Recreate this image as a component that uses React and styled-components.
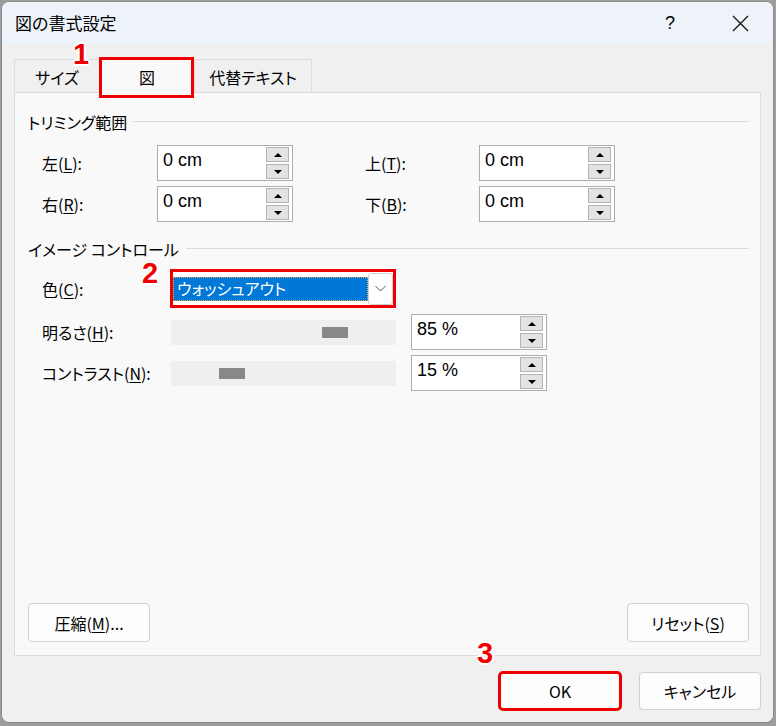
import React from "react";
import styled, { createGlobalStyle } from "styled-components";

const Global = createGlobalStyle`
  html, body { margin: 0; padding: 0; }
  body {
    width: 776px;
    height: 726px;
    overflow: hidden;
    background: #9d9d9d;
    font-family: "Noto Sans CJK JP", "Noto Sans", sans-serif;
    font-feature-settings: "palt";
    color: #000;
  }
  #root { width: 776px; height: 726px; }
`;

const Window = styled.div`
  box-sizing: border-box;
  margin: 1px 0 0 1px;
  width: 773px;
  height: 722px;
  border: 1px solid #8a8a8a;
  border-radius: 8px;
  background: #f0f0f0;
  overflow: hidden;
  display: flex;
  flex-direction: column;
`;

const TitleBar = styled.div`
  flex: none;
  height: 42px;
  background: #eef3f9;
  display: flex;
  align-items: center;
  padding: 0 10px 0 13px;
`;

const Title = styled.div`
  flex: 1;
  font-size: 17px;
  line-height: 22px;
`;

const Controls = styled.div`
  display: flex;
  gap: 24px;
`;

const ControlButton = styled.div`
  width: 46px;
  height: 30px;
  display: flex;
  align-items: center;
  justify-content: center;
  font-size: 18px;
  font-weight: 300;
  font-family: "Liberation Sans", sans-serif;
`;

const Body = styled.div`
  flex: 1;
  display: flex;
  flex-direction: column;
  padding: 13px 12px 12px 12px;
`;

const TabStrip = styled.div`
  flex: none;
  height: 35px;
  display: flex;
  align-items: flex-end;
  position: relative;
  z-index: 1;
`;

const Tab = styled.div`
  position: relative;
  box-sizing: border-box;
  width: ${(p) => p.$width}px;
  height: ${(p) => (p.$active ? 36 : 33)}px;
  margin-bottom: ${(p) => (p.$active ? -1 : 0)}px;
  border: 1px solid #dcdcdc;
  border-bottom: none;
  background: ${(p) => (p.$active ? "#f9f9f9" : "#f0f0f0")};
  display: flex;
  align-items: center;
  justify-content: center;
  padding-top: ${(p) => (p.$active ? 3 : 2)}px;
  font-size: 16px;
  line-height: 20px;

  ${(p) =>
    p.$annotated &&
    `
    &::after {
      content: "";
      position: absolute;
      left: -2px;
      top: -1px;
      right: -1px;
      bottom: -5px;
      border: 3px solid #ee0000;
      box-sizing: border-box;
    }
  `}
`;

const Marker = styled.span`
  position: absolute;
  left: ${(p) => p.$left}px;
  top: ${(p) => p.$top}px;
  font-family: "Liberation Sans", sans-serif;
  font-weight: 700;
  font-size: 29px;
  line-height: 22px;
  color: #ee0000;
  z-index: 3;
  text-shadow: 1px 1px 0 #fff, -1px -1px 0 #fff, 1px -1px 0 #fff, -1px 1px 0 #fff,
    2px 0 0 #fff, -2px 0 0 #fff, 0 2px 0 #fff, 0 -2px 0 #fff;
`;

const Panel = styled.div`
  flex: none;
  box-sizing: border-box;
  height: 564px;
  border: 1px solid #dcdcdc;
  background: #f9f9f9;
  display: flex;
  flex-direction: column;
  padding: 19px 11px 13px 13px;
`;

const SectionHeader = styled.div`
  display: flex;
  align-items: center;
  gap: ${(p) => p.$gap || 6}px;
  margin-top: ${(p) => p.$mt || 0}px;
  font-size: 16px;
  line-height: 20px;
  white-space: nowrap;

  &::after {
    content: "";
    flex: 1;
    height: 1px;
    background: #dcdcdc;
    margin-top: -1px;
  }
`;

const CropGrid = styled.div`
  margin-top: 13px;
  padding-left: 14px;
  display: grid;
  grid-template-columns: 115px 136px 72px 114px 136px;
  grid-auto-rows: 36px;
  row-gap: 5px;
  align-items: center;
`;

const Gap = styled.div``;

const Label = styled.div`
  font-size: 16px;
  line-height: 20px;
  white-space: nowrap;
`;

const Key = styled.u`
  text-underline-offset: 2px;
  text-decoration-thickness: 1px;
`;

const SpinBox = styled.div`
  box-sizing: border-box;
  width: 136px;
  height: 36px;
  border: 1px solid #adadad;
  background: #fff;
  display: flex;
  align-items: flex-start;
`;

const SpinValue = styled.div`
  flex: 1;
  padding: 4px 0 0 5px;
  font-family: "Liberation Sans", sans-serif;
  font-size: 18px;
  line-height: 20px;
  white-space: pre;
`;

const SpinButtons = styled.div`
  align-self: stretch;
  display: flex;
  flex-direction: column;
  gap: 2px;
  padding: 1px 3px 1px 0;
`;

const SpinButton = styled.div`
  box-sizing: border-box;
  flex: 1;
  width: 23px;
  border: 1px solid #b4b4b4;
  background: #e3e3e3;
  display: flex;
  align-items: center;
  justify-content: center;

  &::before {
    content: "";
    width: 0;
    height: 0;
    border-left: 4px solid transparent;
    border-right: 4px solid transparent;
    ${(p) =>
      p.$dir === "up"
        ? "border-bottom: 4px solid #000;"
        : "border-top: 4px solid #000;"}
  }
`;

const ControlRow = styled.div`
  margin-top: ${(p) => p.$mt}px;
  padding-left: 14px;
  display: grid;
  grid-template-columns: 113px 226px 136px;
  column-gap: 15px;
  align-items: center;
`;

const Combo = styled.div`
  position: relative;
  box-sizing: border-box;
  width: 226px;
  height: 39px;
  border: 3px solid #ee0000;
  background: #fff;
  display: flex;
  align-items: center;
`;

const ComboValue = styled.div`
  box-sizing: border-box;
  flex: 1;
  height: 24px;
  background: #0078d7;
  border: 1px dotted #f3a64a;
  color: #fff;
  font-size: 16px;
  line-height: 21px;
  padding-left: 3px;
  white-space: nowrap;
`;

const ComboButton = styled.div`
  box-sizing: border-box;
  width: 25px;
  height: 32px;
  background: #fff;
  border: 1px solid #d0d0d0;
  border-radius: 3px;
  display: flex;
  align-items: center;
  justify-content: center;
`;

const Track = styled.div`
  justify-self: end;
  width: 225px;
  height: 25px;
  background: #efefef;
  display: flex;
  align-items: center;
`;

const Thumb = styled.div`
  width: 26px;
  height: 11px;
  background: #888;
  margin-left: ${(p) => p.$offset}px;
`;

const PanelButtons = styled.div`
  margin-top: auto;
  display: flex;
  justify-content: space-between;
`;

const Button = styled.div`
  position: relative;
  box-sizing: border-box;
  width: 122px;
  height: ${(p) => p.$h || 38}px;
  border: 1px solid #d0d0d0;
  border-radius: 4px;
  background: #fdfdfd;
  display: flex;
  align-items: center;
  justify-content: center;
  font-size: 16px;
  line-height: 20px;
  white-space: nowrap;
  ${(p) =>
    p.$annotated &&
    `
    outline: 3px solid #ee0000;
    outline-offset: -2px;
  `}
`;

const Footer = styled.div`
  margin-top: 16px;
  display: flex;
  justify-content: flex-end;
  gap: 18px;
`;

const Close = () => (
  <svg width="17" height="17" viewBox="0 0 17 17">
    <path d="M1 1 L16 16 M16 1 L1 16" stroke="#111" strokeWidth="1.3" fill="none" />
  </svg>
);

const Chevron = () => (
  <svg width="11" height="7" viewBox="0 0 11 7">
    <path d="M0.5 1 L5.5 6 L10.5 1" stroke="#555" strokeWidth="1" fill="none" />
  </svg>
);

const Spin = ({ value }) => (
  <SpinBox>
    <SpinValue>{value}</SpinValue>
    <SpinButtons>
      <SpinButton $dir="up" />
      <SpinButton $dir="down" />
    </SpinButtons>
  </SpinBox>
);

export default function App() {
  return (
    <>
      <Global />
      <Window>
        <TitleBar>
          <Title>図の書式設定</Title>
          <Controls>
            <ControlButton>?</ControlButton>
            <ControlButton>
              <Close />
            </ControlButton>
          </Controls>
        </TitleBar>
        <Body>
          <TabStrip>
            <Tab $width={86}>サイズ</Tab>
            <Tab $width={94} $active $annotated>
              図
              <Marker $left={-28} $top={-15}>1</Marker>
            </Tab>
            <Tab $width={118}>代替テキスト</Tab>
          </TabStrip>
          <Panel>
            <SectionHeader>トリミング範囲</SectionHeader>
            <CropGrid>
              <Label>
                左(<Key>L</Key>):
              </Label>
              <Spin value="0 cm" />
              <Gap />
              <Label>
                上(<Key>T</Key>):
              </Label>
              <Spin value="0 cm" />
              <Label>
                右(<Key>R</Key>):
              </Label>
              <Spin value="0 cm" />
              <Gap />
              <Label>
                下(<Key>B</Key>):
              </Label>
              <Spin value="0 cm" />
            </CropGrid>

            <SectionHeader $mt={17} $gap={7}>
              イメージ コントロール
            </SectionHeader>
            <ControlRow $mt={10}>
              <Label>
                色(<Key>C</Key>):
              </Label>
              <Combo>
                <Marker $left={-31} $top={-10}>2</Marker>
                <ComboValue>ウォッシュアウト</ComboValue>
                <ComboButton>
                  <Chevron />
                </ComboButton>
              </Combo>
            </ControlRow>
            <ControlRow $mt={6}>
              <Label>
                明るさ(<Key>H</Key>):
              </Label>
              <Track>
                <Thumb $offset={151} />
              </Track>
              <Spin value="85 %" />
            </ControlRow>
            <ControlRow $mt={5}>
              <Label>
                コントラスト(<Key>N</Key>):
              </Label>
              <Track>
                <Thumb $offset={48} />
              </Track>
              <Spin value="15 %" />
            </ControlRow>

            <PanelButtons>
              <Button $h={39}>
                圧縮(<Key>M</Key>)...
              </Button>
              <Button $h={39}>
                リセット(<Key>S</Key>)
              </Button>
            </PanelButtons>
          </Panel>
          <Footer>
            <Button $annotated>
              <Marker $left={-23} $top={-31}>3</Marker>
              OK
            </Button>
            <Button>キャンセル</Button>
          </Footer>
        </Body>
      </Window>
    </>
  );
}
